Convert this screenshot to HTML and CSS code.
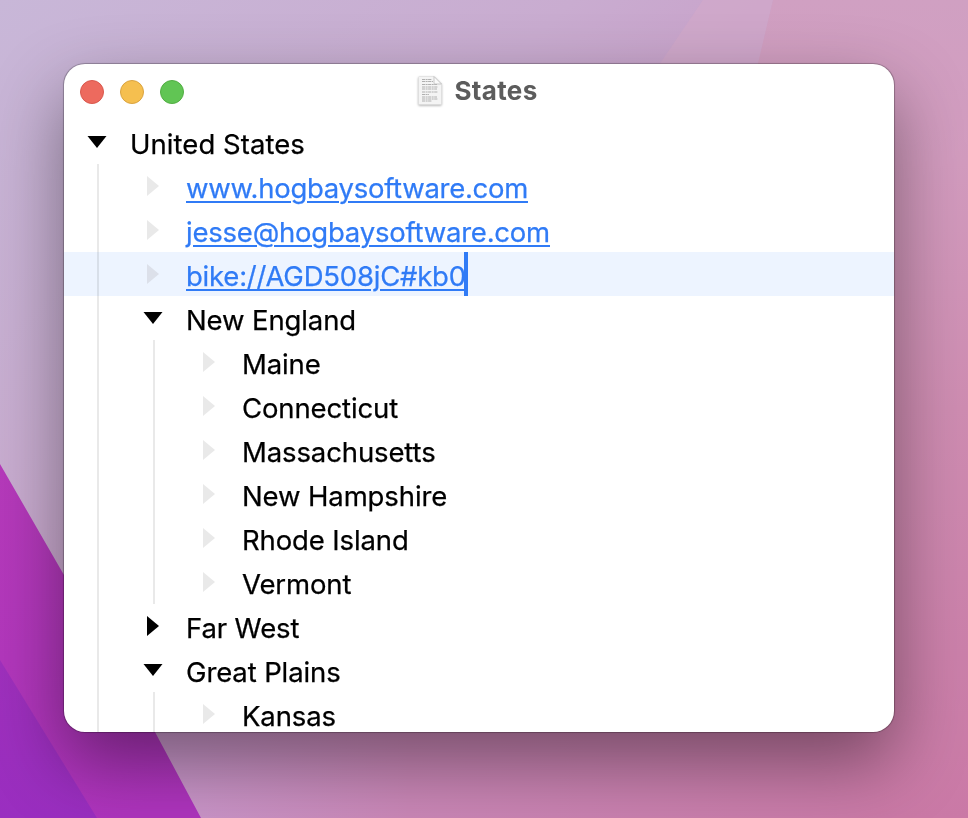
FILE: index.html
```html
<!DOCTYPE html>
<html lang="en">
<head>
<meta charset="utf-8">
<title>States</title>
<link rel="stylesheet" href="styles.css">
</head>
<body>
<svg class="wallpaper" viewBox="0 0 968 818" aria-hidden="true">
  <defs>
    <linearGradient id="base" gradientUnits="userSpaceOnUse" x1="0" y1="0" x2="750" y2="818">
      <stop offset="0" stop-color="#c8b7d8"/><stop offset=".35" stop-color="#c9acd0"/><stop offset=".75" stop-color="#c890c0"/><stop offset="1" stop-color="#ca7aab"/>
    </linearGradient>
    <linearGradient id="rose" gradientUnits="userSpaceOnUse" x1="860" y1="0" x2="860" y2="818">
      <stop offset="0" stop-color="#d0a0c2"/><stop offset=".2" stop-color="#d39cbf"/><stop offset=".5" stop-color="#cf8db2"/><stop offset="1" stop-color="#ca79a6"/>
    </linearGradient>
    <linearGradient id="floor" gradientUnits="userSpaceOnUse" x1="155" y1="0" x2="880" y2="0">
      <stop offset="0" stop-color="#c997cb"/><stop offset=".35" stop-color="#ca87b7"/><stop offset="1" stop-color="#ca7aa7"/>
    </linearGradient>
    <linearGradient id="magenta" gradientUnits="userSpaceOnUse" x1="0" y1="464" x2="120" y2="818">
      <stop offset="0" stop-color="#b63abb"/><stop offset="1" stop-color="#ae34bd"/>
    </linearGradient>
    <linearGradient id="violet" gradientUnits="userSpaceOnUse" x1="0" y1="660" x2="0" y2="818">
      <stop offset="0" stop-color="#9f30bd"/><stop offset="1" stop-color="#9a2ec0"/>
    </linearGradient>
  </defs>
  <path fill="url(#base)" d="M0 0h968v818H0z"/>
  <path fill="#d3a9ca" opacity=".65" d="M703 0h70l-30 130H615z"/>
  <path fill="url(#rose)" d="M773 0h195v818H500L735 160z"/>
  <path fill="url(#floor)" d="M140 700h740v118H140z"/>
  <path fill="url(#magenta)" d="M0 464 64 575 155 732 201 818H0z"/>
  <path fill="url(#violet)" d="M0 660 97 818H0z"/>
</svg>
<main class="window">
  <header class="titlebar">
    <div class="lights"><span class="light close"></span><span class="light minimize"></span><span class="light zoom"></span></div>
    <div class="title">
      <svg class="doc" viewBox="0 0 28 32" aria-hidden="true">
        <path class="sheet" d="M3.500 1.500h14.500l7.500 7.500v19.500q0 1-1 1h-21q-1 0-1-1v-26q0-1 1-1z"/>
        <path class="lines" d="M6 4.500h10M6 6.500h11M6 9.500h15M6 12h16M6 14h15M6 17h16M6 19.500h7M6 22h15M6 24h16M6 26h10"/>
        <path class="fold" d="M18 1.500v6.500q0 1 1 1h6.500z"/>
      </svg>
      <h1>States</h1>
    </div>
  </header>
  <ul class="outline">
    <li><div class="row"><i class="handle open"></i><span class="wide">United States</span></div>
      <ul>
        <li><div class="row"><i class="handle leaf"></i><a class="web">www.hogbaysoftware.com</a></div></li>
        <li><div class="row"><i class="handle leaf"></i><a class="mail">jesse@hogbaysoftware.com</a></div></li>
        <li><div class="row selected"><i class="handle leaf"></i><a class="mail">bike://AGD508jC#kb0</a><i class="caret"></i></div></li>
        <li><div class="row"><i class="handle open"></i><span>New England</span></div>
          <ul>
            <li><div class="row"><i class="handle leaf"></i><span>Maine</span></div></li>
            <li><div class="row"><i class="handle leaf"></i><span>Connecticut</span></div></li>
            <li><div class="row"><i class="handle leaf"></i><span>Massachusetts</span></div></li>
            <li><div class="row"><i class="handle leaf"></i><span>New Hampshire</span></div></li>
            <li><div class="row"><i class="handle leaf"></i><span>Rhode Island</span></div></li>
            <li><div class="row"><i class="handle leaf"></i><span>Vermont</span></div></li>
          </ul>
        </li>
        <li><div class="row"><i class="handle closed"></i><span>Far West</span></div></li>
        <li><div class="row"><i class="handle open"></i><span>Great Plains</span></div>
          <ul>
            <li><div class="row"><i class="handle leaf"></i><span>Kansas</span></div></li>
          </ul>
        </li>
      </ul>
    </li>
  </ul>
</main>
</body>
</html>
```
FILE: styles.css
```css
* { box-sizing: border-box; }
body {
  margin: 0;
  width: 968px;
  height: 818px;
  padding: 64px;
  overflow: hidden;
  position: relative;
  font-family: Inter, "Liberation Sans", sans-serif;
}
.wallpaper { position: absolute; inset: 0; width: 968px; height: 818px; }
.window {
  position: relative;
  isolation: isolate;
  width: 830px;
  height: 668px;
  overflow: hidden;
  background: #fff;
  border-radius: 21px;
  box-shadow: 0 0 0 1px rgba(0,0,0,.2), 0 0 3px rgba(0,0,0,.15), 0 30px 72px rgba(0,0,0,.42);
}
.titlebar { position: relative; height: 56px; display: flex; align-items: center; justify-content: center; }
.lights { position: absolute; left: 16px; top: 16px; display: flex; gap: 16px; }
.light { width: 24px; height: 24px; border-radius: 50%; border: 1px solid; }
.close { background: #ed6a5e; border-color: #d8584d; }
.minimize { background: #f5bf4f; border-color: #d9a340; }
.zoom { background: #61c554; border-color: #52ad43; }
.title { display: flex; align-items: center; gap: 10px; margin-top: -3px; margin-left: -4px; }
.doc { width: 28px; height: 32px; filter: drop-shadow(0 1px 1px rgba(0,0,0,.3)); }
.sheet { fill: #f4f4f4; stroke: #dedede; stroke-width: .6; }
.lines { fill: none; stroke: #b0b0b0; stroke-width: 1; stroke-dasharray: 3 .6 2 .5; }
.fold { fill: #fafafa; stroke: #bdbdbd; stroke-width: .8; }
h1 { margin: 0; font-size: 26px; line-height: 32px; font-weight: 700; color: #5c5c5c; letter-spacing: .35px; }
ul { list-style: none; margin: 0; padding: 0; }
ul ul { margin-left: 33px; border-left: 2px solid #e9e9e9; padding-left: 21px; }
.row { display: flex; height: 44px; padding-left: 22px; font-size: 27.500px; line-height: 48px; white-space: nowrap; color: #000; -webkit-text-stroke: .25px currentColor; }
.row span, .row a { letter-spacing: -.12px; }
.row .wide { letter-spacing: .05px; }
.row .web { letter-spacing: -.29px; }
.row .mail { letter-spacing: -.22px; }
.handle { flex: none; width: 22px; height: 44px; margin-right: 22px; background: #000; }
.open { clip-path: polygon(1.500px 16px, 20.500px 16px, 11px 28px); }
.closed, .leaf { clip-path: polygon(5px 12px, 17px 22px, 5px 32px); }
.leaf { background: #e9e9e9; }
.row a { color: #307bf6; text-decoration: underline; text-decoration-thickness: 2px; text-underline-offset: 3px; }
.selected { margin-left: -56px; padding-left: 78px; background: #edf4ff; mix-blend-mode: multiply; }
.selected .leaf { background: #dce0ea; }
.caret { width: 4px; height: 44px; margin-left: -2px; background: #307bf6; }
```
